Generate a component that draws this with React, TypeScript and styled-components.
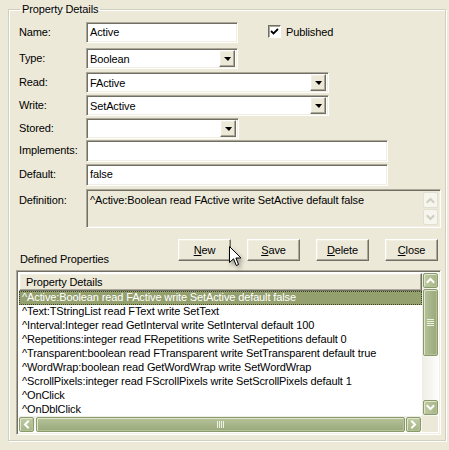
import React from "react";
import styled, { createGlobalStyle, css } from "styled-components";

const GlobalStyle = createGlobalStyle`
  html, body {
    margin: 0;
    padding: 0;
    background: #ece9d8;
  }
  * {
    box-sizing: border-box;
  }
`;

const font = css`
  font-family: "Liberation Sans", Arial, sans-serif;
  font-size: 11px;
  letter-spacing: -0.12px;
  color: #000;
`;

const sunken = css`
  border: 1px solid;
  border-color: #aca899 #fff #fff #aca899;
  box-shadow: inset 1px 1px #716f64, inset -1px -1px #f1efe2;
`;

const raised = css`
  border: 1px solid;
  border-color: #fff #716f64 #716f64 #fff;
  box-shadow: inset -1px -1px #aca899, inset 1px 1px #f1efe2;
  background: #ece9d8;
`;

const Window = styled.div`
  ${font};
  position: relative;
  width: 449px;
  height: 450px;
  padding: 2px 3px 0 8px;
  background: #ece9d8;
  overflow: hidden;
`;

const GroupBox = styled.fieldset`
  margin: 0;
  width: 438px;
  height: 439px;
  padding: 6px 4px 0 7px;
  border: 1px solid #d0d0bf;
  box-shadow: inset 1px 1px #fff, 1px 1px #fff;
  display: flex;
  flex-direction: column;
`;

const Legend = styled.legend`
  ${font};
  line-height: 14px;
  padding: 0 2px;
  margin-left: 4px;
`;

const Row = styled.div<{ $mt?: number; $h?: number }>`
  display: flex;
  align-items: center;
  height: ${(p) => p.$h ?? 21}px;
  margin-top: ${(p) => p.$mt ?? 0}px;
`;

const Label = styled.span<{ $top?: boolean }>`
  width: 70px;
  padding-left: 3px;
  align-self: ${(p) => (p.$top ? "flex-start" : "center")};
  margin-top: ${(p) => (p.$top ? 5 : -2)}px;
  white-space: nowrap;
`;

const Edit = styled.div<{ $w: number }>`
  ${sunken};
  width: ${(p) => p.$w}px;
  height: 100%;
  background: #fff;
  padding: 3px 0 0 3px;
  white-space: nowrap;
`;

const ComboBox = styled.div<{ $w: number }>`
  ${sunken};
  width: ${(p) => p.$w}px;
  height: 100%;
  background: #fff;
  padding: 2px 2px 2px 3px;
  display: flex;
  align-items: center;
  justify-content: space-between;
`;

const ComboText = styled.span`
  padding-top: 1px;
`;

const DropButton = styled.div`
  ${raised};
  width: 16px;
  height: 17px;
  display: flex;
  align-items: center;
  justify-content: center;
`;

const Triangle = styled.span`
  width: 0;
  height: 0;
  border-left: 4px solid transparent;
  border-right: 3px solid transparent;
  border-top: 4px solid #000;
  margin-top: 1px;
`;

const CheckLabel = styled.label`
  display: flex;
  align-items: center;
  gap: 5px;
  margin-left: 30px;
  margin-top: -2px;
`;

const CheckBox = styled.span`
  width: 13px;
  height: 13px;
  background: #fff;
  border: 1px solid;
  border-color: #716f64 #fff #fff #716f64;
  box-shadow: inset 1px 1px #aca899;
  display: flex;
  align-items: center;
  justify-content: center;
`;

const Memo = styled.div`
  ${sunken};
  width: 355px;
  height: 39px;
  padding: 2px 2px 2px 3px;
  display: flex;
  justify-content: space-between;
  white-space: nowrap;
`;

const MemoText = styled.span`
  padding-top: 2px;
`;

const MemoScroll = styled.div`
  width: 15px;
  display: flex;
  flex-direction: column;
  gap: 1px;
`;

const DisabledArrow = styled.div`
  width: 15px;
  height: 17px;
  border: 1px solid #e2e0d2;
  border-radius: 2px;
  background: #f6f5ee;
  display: flex;
  align-items: center;
  justify-content: center;
`;

const ActionRow = styled.div`
  display: flex;
  height: 27px;
  margin-top: 11px;
  padding-right: 3px;
`;

const SectionLabel = styled.span`
  align-self: flex-end;
  line-height: 14px;
  padding-left: 4px;
  flex: 1;
`;

const Buttons = styled.div`
  display: flex;
  gap: 16px;
  height: 22px;
`;

const Button = styled.button`
  ${font};
  ${raised};
  width: 53px;
  height: 22px;
  padding: 0;
  border-radius: 0;
  u {
    text-decoration: underline;
    text-underline-offset: 1px;
  }
`;

const ListBox = styled.div`
  ${sunken};
  margin-top: 4px;
  width: 425px;
  height: 165px;
  padding: 2px;
  display: grid;
  grid-template-columns: 1fr 16px;
  grid-template-rows: 1fr 16px;
  background: #fff;
`;

const ListBody = styled.div`
  overflow: hidden;
  display: flex;
  flex-direction: column;
`;

const Header = styled.div`
  ${raised};
  height: 18px;
  padding: 2px 0 0 6px;
  flex: none;
  white-space: nowrap;
`;

const Item = styled.div<{ $selected?: boolean }>`
  height: 14px;
  line-height: 13px;
  padding-left: 3px;
  white-space: nowrap;
  flex: none;
  ${(p) =>
    p.$selected &&
    css`
      background: #95a06f;
      color: #fff;
      outline: 1px dotted #3d4523;
      outline-offset: -1px;
    `}
`;

const VScroll = styled.div`
  display: flex;
  flex-direction: column;
  background: linear-gradient(to right, #eeede5, #fdfdfa);
  padding: 0 0 1px 1px;
`;

const HScroll = styled.div`
  display: flex;
  background: linear-gradient(to bottom, #eeede5, #fdfdfa);
  padding: 1px 1px 0 0;
`;

const Corner = styled.div`
  background: #ece9d8;
`;

const olive = css`
  border: 1px solid #8a9a6b;
  border-radius: 2px;
  box-shadow: inset 1px 1px #dfe6cd, inset -1px -1px #b4c29a;
`;

const ArrowBtn = styled.div<{ $vertical?: boolean }>`
  ${olive};
  width: 15px;
  height: 15px;
  flex: none;
  background: ${(p) =>
    p.$vertical
      ? "linear-gradient(to right, #c0cca3, #a5b486)"
      : "linear-gradient(to bottom, #c0cca3, #a5b486)"};
  display: flex;
  align-items: center;
  justify-content: center;
`;

const Thumb = styled.div<{ $vertical?: boolean }>`
  ${olive};
  display: flex;
  align-items: center;
  justify-content: center;
  ${(p) =>
    p.$vertical
      ? css`
          width: 15px;
          height: 67px;
          margin-top: 1px;
          background: linear-gradient(to right, #b6c39a, #a4b286 60%, #9aa97c);
        `
      : css`
          height: 15px;
          flex: 1;
          margin: 0 1px 0 2px;
          background: linear-gradient(to bottom, #b6c39a, #a4b286 60%, #9aa97c);
        `}
`;

const Spacer = styled.div`
  flex: 1;
`;

const Cursor = styled.svg`
  position: absolute;
  left: 229px;
  top: 246px;
  filter: drop-shadow(2px 3px 2px rgba(0, 0, 0, 0.35));
`;

const Chevron: React.FC<{ dir: "up" | "down" | "left" | "right"; color?: string }> = ({
  dir,
  color = "#fff",
}) => {
  const d = {
    up: "M1.5 6 L4.5 3 L7.5 6",
    down: "M1.5 3 L4.5 6 L7.5 3",
    left: "M6 1.5 L3 4.5 L6 7.5",
    right: "M3 1.5 L6 4.5 L3 7.5",
  }[dir];
  return (
    <svg width="9" height="9" viewBox="0 0 9 9">
      <path d={d} fill="none" stroke={color} strokeWidth="2" strokeLinecap="square" />
    </svg>
  );
};

const Grip: React.FC<{ vertical?: boolean }> = ({ vertical }) =>
  vertical ? (
    <svg width="7" height="8" viewBox="0 0 7 8">
      {[0, 2, 4, 6].map((y) => (
        <line key={y} x1="0" x2="7" y1={y + 0.5} y2={y + 0.5} stroke="#eef2e3" />
      ))}
    </svg>
  ) : (
    <svg width="8" height="7" viewBox="0 0 8 7">
      {[0, 2, 4, 6].map((x) => (
        <line key={x} y1="0" y2="7" x1={x + 0.5} x2={x + 0.5} stroke="#eef2e3" />
      ))}
    </svg>
  );

const Combo: React.FC<{ w: number; value?: string }> = ({ w, value }) => (
  <ComboBox $w={w}>
    <ComboText>{value}</ComboText>
    <DropButton>
      <Triangle />
    </DropButton>
  </ComboBox>
);

const items = [
  "^Active:Boolean read FActive write SetActive default false",
  "^Text:TStringList read FText write SetText",
  "^Interval:Integer read GetInterval write SetInterval default 100",
  "^Repetitions:integer read FRepetitions write SetRepetitions default 0",
  "^Transparent:boolean read FTransparent write SetTransparent default true",
  "^WordWrap:boolean read GetWordWrap write SetWordWrap",
  "^ScrollPixels:integer read FScrollPixels write SetScrollPixels default 1",
  "^OnClick",
  "^OnDblClick",
];

const App: React.FC = () => {
  return (
    <Window>
      <GlobalStyle />
      <GroupBox>
        <Legend>Property Details</Legend>

        <Row>
          <Label>Name:</Label>
          <Edit $w={152}>Active</Edit>
          <CheckLabel>
            <CheckBox>
              <svg width="9" height="9" viewBox="0 0 9 9">
                <path d="M1 4 L3.5 6.5 L8 2" fill="none" stroke="#000" strokeWidth="1.8" />
              </svg>
            </CheckBox>
            Published
          </CheckLabel>
        </Row>

        <Row $mt={5}>
          <Label>Type:</Label>
          <Combo w={152} value="Boolean" />
        </Row>

        <Row $mt={3}>
          <Label>Read:</Label>
          <Combo w={243} value="FActive" />
        </Row>

        <Row $mt={2}>
          <Label>Write:</Label>
          <Combo w={243} value="SetActive" />
        </Row>

        <Row $mt={2}>
          <Label>Stored:</Label>
          <Combo w={153} />
        </Row>

        <Row $mt={1} $h={22}>
          <Label>Implements:</Label>
          <Edit $w={302} />
        </Row>

        <Row $mt={2} $h={22}>
          <Label>Default:</Label>
          <Edit $w={302}>false</Edit>
        </Row>

        <Row $mt={3} $h={39}>
          <Label $top>Definition:</Label>
          <Memo>
            <MemoText>^Active:Boolean read FActive write SetActive default false</MemoText>
            <MemoScroll>
              <DisabledArrow>
                <Chevron dir="up" color="#cfcebf" />
              </DisabledArrow>
              <DisabledArrow>
                <Chevron dir="down" color="#cfcebf" />
              </DisabledArrow>
            </MemoScroll>
          </Memo>
        </Row>

        <ActionRow>
          <SectionLabel>Defined Properties</SectionLabel>
          <Buttons>
            <Button>
              <u>N</u>ew
            </Button>
            <Button>
              <u>S</u>ave
            </Button>
            <Button>
              <u>D</u>elete
            </Button>
            <Button>
              <u>C</u>lose
            </Button>
          </Buttons>
        </ActionRow>

        <ListBox>
          <ListBody>
            <Header>Property Details</Header>
            {items.map((it, i) => (
              <Item key={it} $selected={i === 0}>
                {it}
              </Item>
            ))}
          </ListBody>
          <VScroll>
            <ArrowBtn $vertical>
              <Chevron dir="up" />
            </ArrowBtn>
            <Thumb $vertical>
              <Grip vertical />
            </Thumb>
            <Spacer />
            <ArrowBtn $vertical>
              <Chevron dir="down" />
            </ArrowBtn>
          </VScroll>
          <HScroll>
            <ArrowBtn>
              <Chevron dir="left" />
            </ArrowBtn>
            <Thumb>
              <Grip />
            </Thumb>
            <ArrowBtn>
              <Chevron dir="right" />
            </ArrowBtn>
          </HScroll>
          <Corner />
        </ListBox>
      </GroupBox>

      <Cursor width="14" height="22" viewBox="0 0 14 22">
        <path
          d="M0.5 0.5 L0.5 16.5 L4.5 12.8 L7.3 19.5 L9.6 18.5 L6.9 12 L12 12 Z"
          fill="#fff"
          stroke="#000"
          strokeWidth="1"
          strokeLinejoin="miter"
        />
      </Cursor>
    </Window>
  );
};

export default App;
